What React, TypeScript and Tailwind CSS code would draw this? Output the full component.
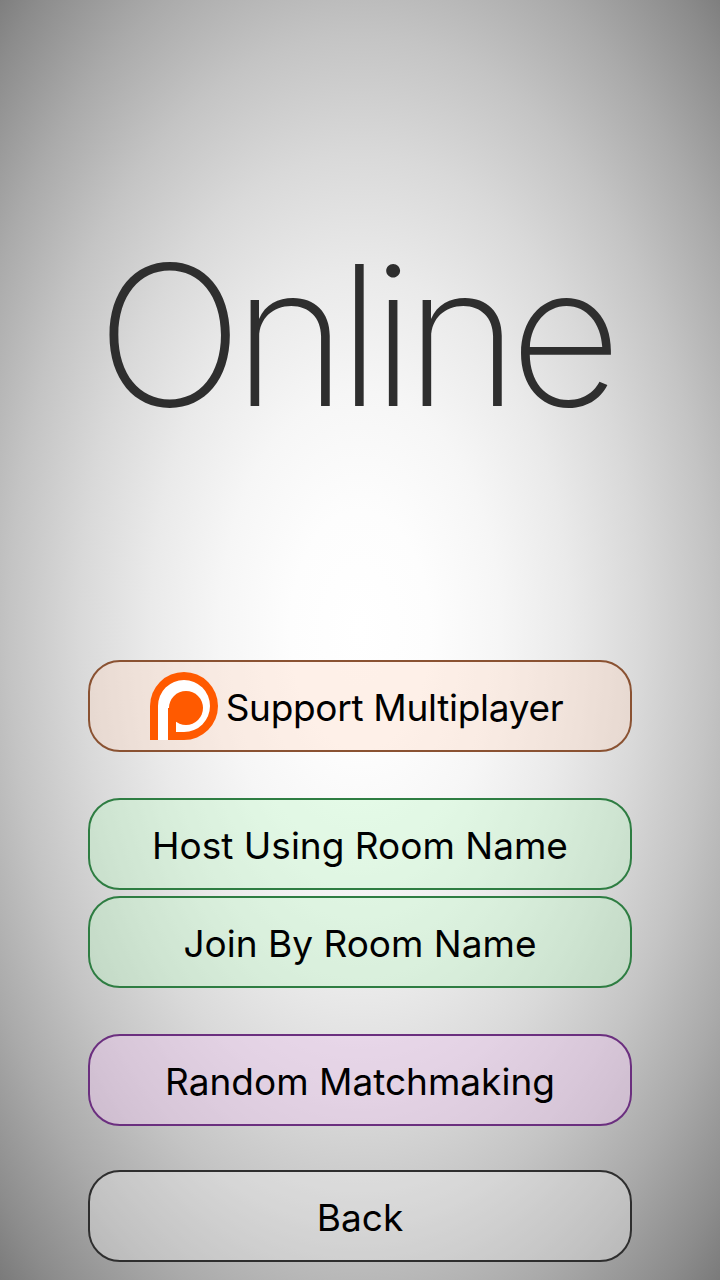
function PatreonLogo() {
  return (
    <svg width="68" height="68" viewBox="0 0 68 68" className="shrink-0">
      <path d="M0 68V34a34 34 0 1 1 34 34Z" fill="#ff5a00" />
      <path d="M8 68V34a26 26 0 1 1 26 26h-8V68Z" fill="#fff" />
      <circle cx="36" cy="36" r="17" fill="#ff5a00" />
      <rect x="18" y="36" width="8" height="32" fill="#ff5a00" />
    </svg>
  );
}

function MenuButton({
  className,
  children,
}: {
  className: string;
  children: React.ReactNode;
}) {
  return (
    <button
      className={`flex h-[92px] w-[544px] items-center justify-center rounded-[32px] border-2 font-['Inter',sans-serif] text-[37px] text-black ${className}`}
    >
      {children}
    </button>
  );
}

export default function App() {
  return (
    <div className="flex h-[1280px] w-[720px] flex-col items-center overflow-hidden bg-[radial-gradient(ellipse_700px_1190px_at_360px_630px,#ffffff_0%,#fdfdfd_10%,#f6f6f6_20%,#eaeaea_30%,#d9d9d9_40%,#c4c4c4_50%,#aaaaaa_60%,#8c8c8c_70%,#696969_80%)]">
      <h1 className="mt-[210px] h-[250px] pr-[12px] font-['Inter',sans-serif] text-[195px] leading-[250px] font-extralight tracking-[-10px] text-[#2e2e2e]">
        Online
      </h1>
      <div className="mt-[200px] flex flex-col items-center">
        <MenuButton className="gap-[8px] border-[#8a5232] bg-[#ffd6c1]/35 pr-[7px]">
          <PatreonLogo />
          <span className="pt-[4px] tracking-[-0.3px]">Support Multiplayer</span>
        </MenuButton>
        <MenuButton className="mt-[46px] border-[#2e7d42] bg-[#bbf9c4]/35">
          <span className="pt-[4px]">Host Using Room Name</span>
        </MenuButton>
        <MenuButton className="mt-[6px] border-[#2e7d42] bg-[#bbf9c4]/35">
          <span className="pt-[4px]">Join By Room Name</span>
        </MenuButton>
        <MenuButton className="mt-[46px] border-[#6b2f7f] bg-[#eec8f0]/45">
          <span className="pt-[4px]">Random Matchmaking</span>
        </MenuButton>
        <MenuButton className="mt-[44px] border-[#2e2e2e] bg-white/30">
          <span className="pt-[4px]">Back</span>
        </MenuButton>
      </div>
    </div>
  );
}
